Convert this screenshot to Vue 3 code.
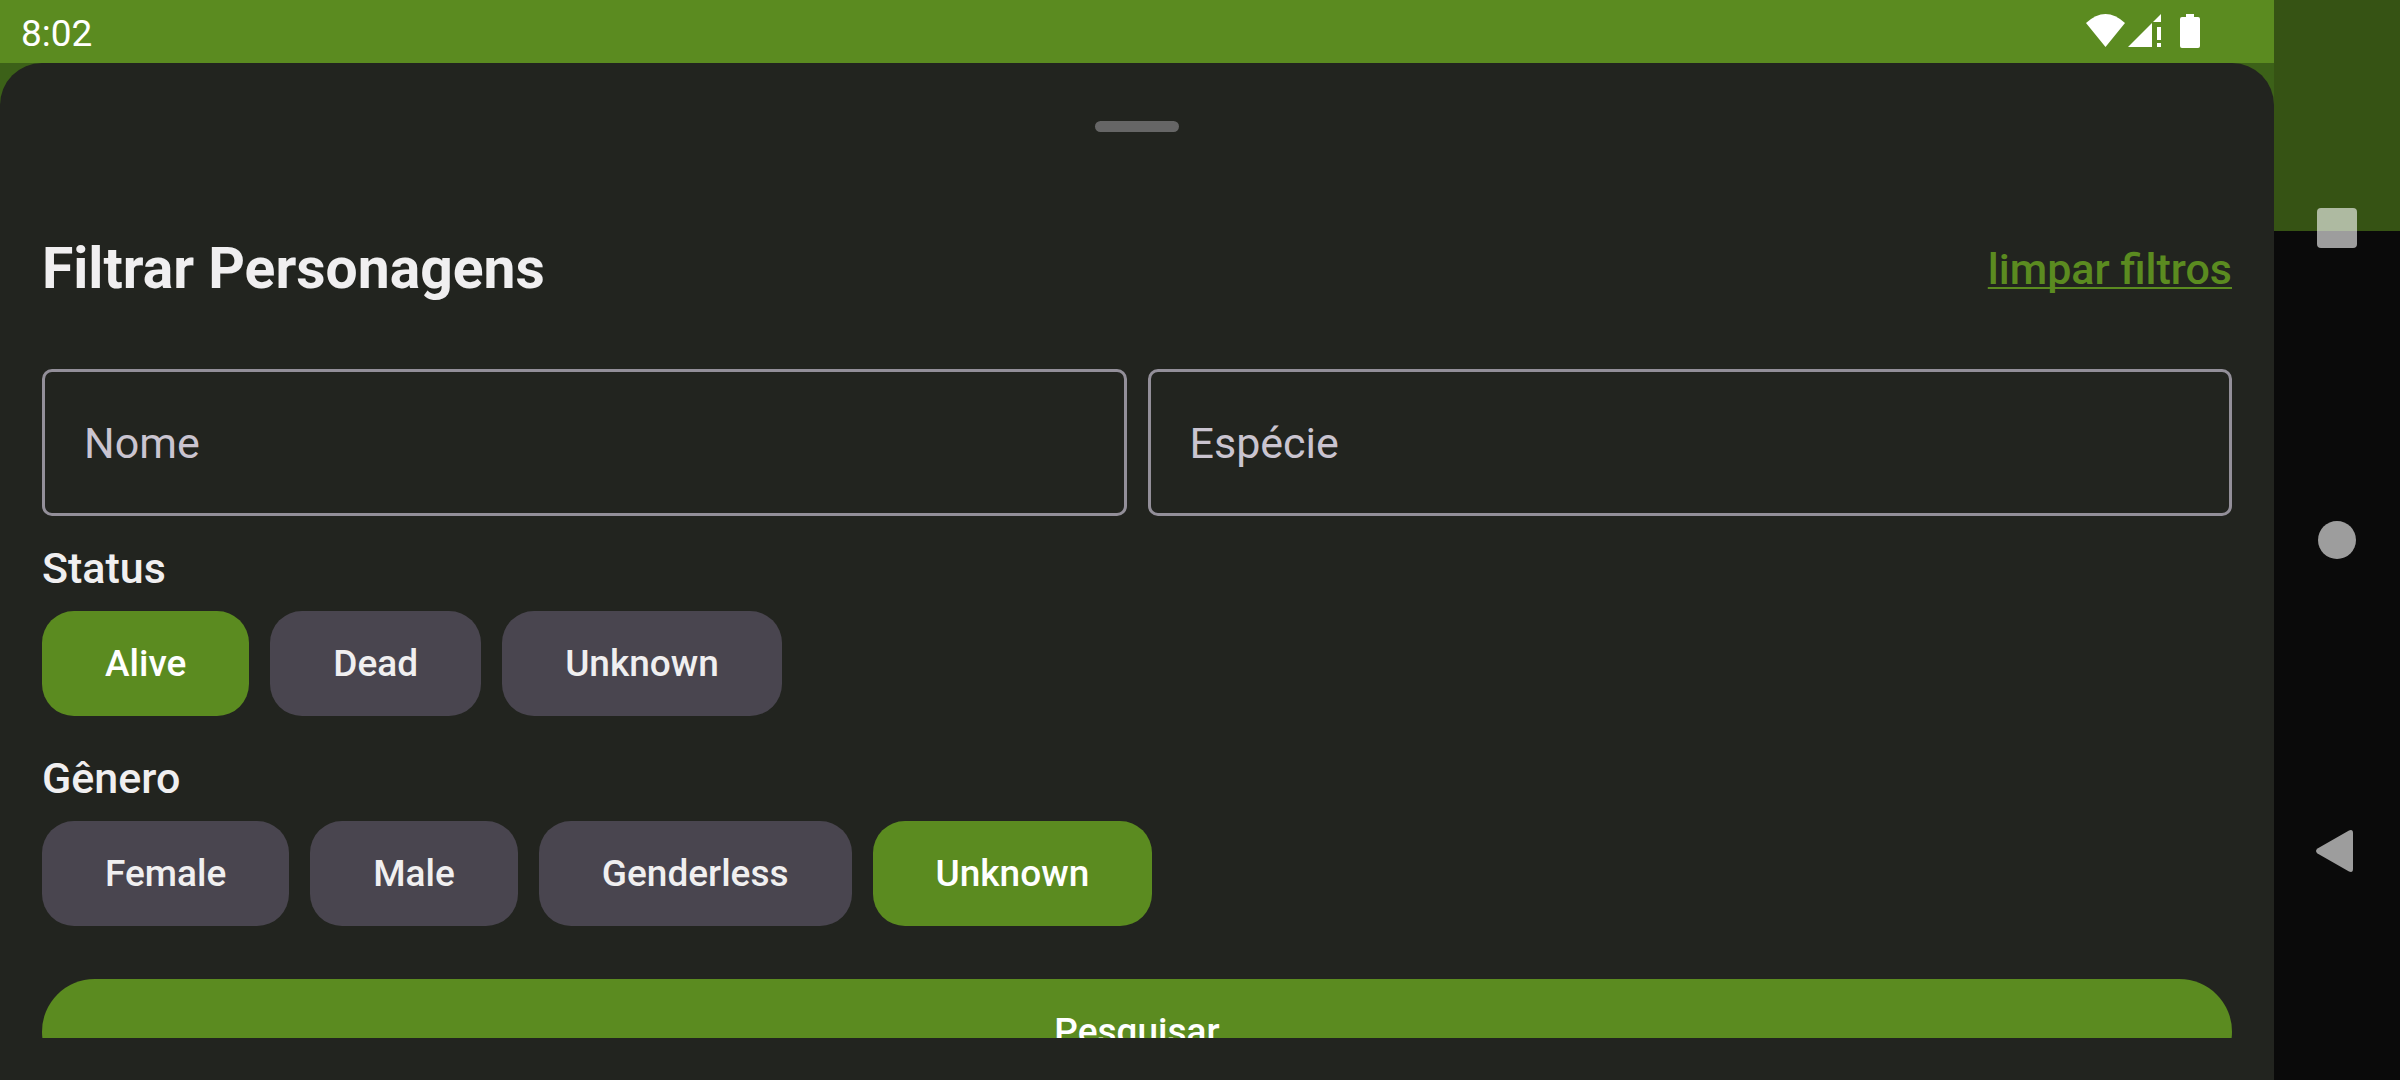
<script setup>
import { ref } from 'vue'

const name = ref('')
const species = ref('')
const status = ref('Alive')
const gender = ref('Unknown')

const statuses = ['Alive', 'Dead', 'Unknown']
const genders = ['Female', 'Male', 'Genderless', 'Unknown']

function clearFilters() {
  name.value = ''
  species.value = ''
  status.value = ''
  gender.value = ''
}
</script>

<template>
  <div class="screen">
    <div class="app">
      <header class="status-bar">
        <time class="clock">8:02</time>
        <div class="indicators">
          <svg class="wifi" viewBox="0 0 39 33" width="39" height="33" aria-hidden="true">
            <path d="M0 9Q19.500 -9 39 9L19.500 33Z" fill="#fff" />
          </svg>
          <svg class="signal" viewBox="0 0 33 33" width="33" height="33" aria-hidden="true">
            <path d="M0 33L24 9V33ZM25 8L33 0V8ZM29 13H33V26H29ZM29 29H33V33H29Z" fill="#fff" />
          </svg>
          <svg class="battery" viewBox="0 0 20 34" width="20" height="34" aria-hidden="true">
            <path d="M6 0H14V3H18Q20 3 20 5V32Q20 34 18 34H2Q0 34 0 32V5Q0 3 2 3H6Z" fill="#fff" />
          </svg>
        </div>
      </header>

      <main class="sheet">
        <div class="handle"></div>
        <form class="content" @submit.prevent>
          <div class="heading">
            <h1>Filtrar Personagens</h1>
            <a href="#" @click.prevent="clearFilters">limpar filtros</a>
          </div>

          <div class="fields">
            <input v-model="name" type="text" placeholder="Nome" aria-label="Nome" />
            <input v-model="species" type="text" placeholder="Espécie" aria-label="Espécie" />
          </div>

          <section class="group">
            <h2 id="status-label">Status</h2>
            <div class="chips" role="group" aria-labelledby="status-label">
              <button
                v-for="item in statuses"
                :key="item"
                type="button"
                class="chip"
                :class="{ selected: status === item }"
                :aria-pressed="status === item"
                @click="status = item"
              >{{ item }}</button>
            </div>
          </section>

          <section class="group">
            <h2 id="gender-label">Gênero</h2>
            <div class="chips" role="group" aria-labelledby="gender-label">
              <button
                v-for="item in genders"
                :key="item"
                type="button"
                class="chip"
                :class="{ selected: gender === item }"
                :aria-pressed="gender === item"
                @click="gender = item"
              >{{ item }}</button>
            </div>
          </section>

          <button type="submit" class="search">Pesquisar</button>
        </form>
      </main>
    </div>

    <nav class="system-nav" aria-label="Sistema">
      <button type="button" aria-label="Recentes">
        <svg viewBox="0 0 42 42" width="42" height="42"><rect x="1" y="1" width="40" height="40" rx="4" /></svg>
      </button>
      <button type="button" aria-label="Início">
        <svg viewBox="0 0 42 42" width="42" height="42"><circle cx="21" cy="21" r="19" /></svg>
      </button>
      <button type="button" aria-label="Voltar">
        <svg viewBox="0 1 42 42" width="42" height="42" overflow="visible">
          <path d="M1.500 18.500L33 0.500Q37 -1 37 3V39Q37 43 33 41.500L1.500 23.500Q-1.500 21 1.500 18.500Z" />
        </svg>
      </button>
    </nav>
  </div>
</template>

<style>
body {
  margin: 0;
  background: #0a0a0a;
}
</style>

<style scoped>
.screen {
  display: flex;
  height: 100vh;
  overflow: hidden;
  font-family: Roboto, "Liberation Sans", sans-serif;
  color: #f0eff0;
}

.screen * {
  box-sizing: border-box;
}

.app {
  flex: 1;
  min-width: 0;
  display: flex;
  flex-direction: column;
  background: #3c6118;
}

.status-bar {
  display: flex;
  align-items: center;
  justify-content: space-between;
  height: 63px;
  padding: 0 74px 0 21px;
  background: #5b8b20;
  color: #fff;
}

.clock {
  font-size: 37px;
  line-height: 44px;
  padding-top: 4px;
}

.indicators {
  display: flex;
  align-items: flex-start;
  padding-bottom: 2px;
}

.signal {
  margin: 0 19px 0 3px;
}

.sheet {
  flex: 1;
  min-height: 0;
  display: flex;
  flex-direction: column;
  align-items: center;
  padding: 58px 42px 42px;
  border-radius: 42px 42px 0 0;
  background: #22241f;
}

.handle {
  flex: none;
  width: 84px;
  height: 11px;
  border-radius: 6px;
  background: #666;
}

.content {
  flex: 1;
  min-height: 0;
  width: 100%;
  padding-top: 103px;
  overflow: hidden;
}

.heading {
  display: flex;
  align-items: center;
  justify-content: space-between;
  margin-bottom: 66px;
}

h1 {
  margin: 0;
  font-size: 57px;
  line-height: 68px;
  font-weight: 700;
}

.heading a {
  color: #5b8b20;
  font-size: 43px;
  line-height: 49px;
  font-weight: 500;
  text-decoration-thickness: 2px;
  text-underline-offset: 3px;
  text-decoration-skip-ink: none;
}

.fields {
  display: flex;
  gap: 21px;
  margin-bottom: 28px;
}

.fields input {
  flex: 1;
  min-width: 0;
  height: 147px;
  padding: 0 39px;
  border: 3px solid #938f99;
  border-radius: 10px;
  outline: 0;
  background: transparent;
  color: #f0eff0;
  font: inherit;
  font-size: 43px;
}

.fields input::placeholder {
  color: #cac4d0;
  opacity: 1;
}

.group {
  margin-bottom: 38px;
}

h2 {
  margin: 0 0 18px;
  font-size: 43px;
  line-height: 49px;
  font-weight: 500;
}

.chips {
  display: flex;
  gap: 21px;
}

.chip,
.search {
  height: 105px;
  border: 0;
  font: inherit;
  font-size: 37px;
  font-weight: 500;
}

.chip {
  padding: 0 63px;
  border-radius: 32px;
  background: #49454f;
  color: #f0eff0;
}

.search {
  display: block;
  width: 100%;
  margin-top: 53px;
  border-radius: 53px;
}

.chip.selected,
.search {
  background: #5b8b20;
  color: #fff;
}

.system-nav {
  flex: none;
  width: 126px;
  display: flex;
  flex-direction: column;
  align-items: center;
  justify-content: space-between;
  padding: 165px 0;
  background: linear-gradient(#365314 231px, #0a0a0a 231px);
}

.system-nav button {
  display: grid;
  place-items: center;
  width: 126px;
  height: 126px;
  padding: 0;
  border: 0;
  background: none;
}

.system-nav svg {
  fill: #fff;
  opacity: 0.6;
}
</style>
